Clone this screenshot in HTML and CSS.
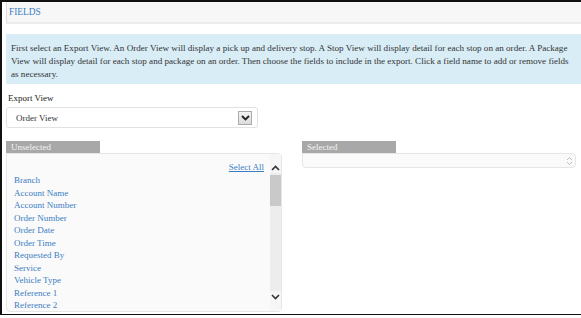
FILE: index.html
```html
<!DOCTYPE html>
<html>
<head>
<meta charset="utf-8">
<link rel="stylesheet" href="styles.css">
</head>
<body>
<div class="frame">
  <div class="panel-head">FIELDS</div>
  <div class="info">First select an Export View. An Order View will display a pick up and delivery stop. A Stop View will display detail for each stop on an order. A Package View will display detail for each stop and package on an order. Then choose the fields to include in the export. Click a field name to add or remove fields as necessary.</div>
  <div class="label">Export View</div>
  <div class="select">
    <span class="select-text">Order View</span>
    <span class="select-arrow"><svg width="9" height="6" viewBox="0 0 9 6"><path d="M1 1 L4.5 4.5 L8 1" fill="none" stroke="#222" stroke-width="1.8"/></svg></span>
  </div>
  <div class="columns">
    <div class="col">
      <div class="tab">Unselected</div>
      <div class="listbox">
        <div class="list">
          <div class="selall-row"><a class="selall">Select All</a></div>
          <a class="item">Branch</a>
          <a class="item">Account Name</a>
          <a class="item">Account Number</a>
          <a class="item">Order Number</a>
          <a class="item">Order Date</a>
          <a class="item">Order Time</a>
          <a class="item">Requested By</a>
          <a class="item">Service</a>
          <a class="item">Vehicle Type</a>
          <a class="item">Reference 1</a>
          <a class="item">Reference 2</a>
        </div>
        <div class="scrollbar">
          <div class="sb-arrow"><svg width="9" height="6" viewBox="0 0 9 6"><path d="M1 5 L4.5 1.5 L8 5" fill="none" stroke="#333" stroke-width="1.6"/></svg></div>
          <div class="sb-track"><div class="sb-thumb"></div></div>
          <div class="sb-arrow"><svg width="9" height="6" viewBox="0 0 9 6"><path d="M1 1 L4.5 4.5 L8 1" fill="none" stroke="#333" stroke-width="1.6"/></svg></div>
        </div>
      </div>
    </div>
    <div class="col">
      <div class="tab">Selected</div>
      <div class="listbox small">
        <div class="mini-arrows">
          <svg width="7" height="5" viewBox="0 0 7 5"><path d="M1 4 L3.5 1.5 L6 4" fill="none" stroke="#bbb" stroke-width="1"/></svg>
          <svg width="7" height="5" viewBox="0 0 7 5"><path d="M1 1 L3.5 3.5 L6 1" fill="none" stroke="#bbb" stroke-width="1"/></svg>
        </div>
      </div>
    </div>
  </div>
</div>
</body>
</html>
```
FILE: styles.css
```css
html, body {
  margin: 0;
  padding: 0;
  background: #fff;
}
body {
  font-family: "Liberation Serif", "Times New Roman", serif;
  font-size: 9px;
  color: #333;
}
.frame {
  width: 575px;
  height: 312px;
  border: 1px solid #111;
  border-left-width: 2px;
  border-top-width: 2px;
  box-shadow: 2px 2px 1px #9a9a9a;
  padding-left: 4px;
  overflow: hidden;
  box-sizing: content-box;
}
.panel-head {
  height: 20px;
  line-height: 21px;
  background: #f7f7f7;
  border-left: 1px solid #ddd;
  border-bottom: 2px solid #ececec;
  padding-left: 2px;
  color: #3a7dc3;
  font-size: 9.4px;
}
.info {
  margin-top: 10px;
  background: #d9edf7;
  padding: 8px 4px 3px 5px;
  line-height: 13px;
  font-size: 9.1px;
  color: #333;
}
.label {
  margin-top: 8px;
  line-height: 13px;
  padding-left: 2px;
  color: #222;
}
.select {
  margin-top: 2px;
  height: 19px;
  border: 1px solid #e2e2e2;
  border-radius: 3px;
  display: flex;
  align-items: center;
  justify-content: space-between;
  padding: 0 5px 0 9px;
  box-sizing: content-box;
  width: 236px;
}
.select-text {
  color: #333;
}
.select-arrow {
  width: 12px;
  height: 12px;
  border: 1px solid #aaa;
  background: linear-gradient(#f4f4f4, #dcdcdc);
  display: flex;
  align-items: center;
  justify-content: center;
}
.columns {
  margin-top: 13px;
  display: flex;
  gap: 20px;
}
.col {
  width: 276px;
}
.col + .col {
  width: 274px;
}
.tab {
  width: 89px;
  height: 12px;
  line-height: 13px;
  background: #a8a8a8;
  color: #f4f4f4;
  padding-left: 5px;
}
.listbox {
  height: 157px;
  border: 1px solid #e6e6e6;
  border-radius: 0 4px 4px 4px;
  background: #fafafa;
  display: flex;
}
.list {
  flex: 1;
  padding: 7px 5px 0 7px;
  display: flex;
  flex-direction: column;
}
.selall-row {
  display: flex;
  justify-content: flex-end;
  line-height: 13px;
}
.selall {
  color: #3a7dc3;
  text-decoration: underline;
  margin-right: 1px;
}
.item {
  color: #3a7dc3;
  line-height: 12.5px;
  display: block;
}
.scrollbar {
  width: 11px;
  display: flex;
  flex-direction: column;
  background: #f6f6f6;
}
.sb-arrow {
  display: flex;
  align-items: center;
  justify-content: center;
}
.sb-arrow:first-child {
  margin-top: 8px;
  height: 11px;
}
.sb-arrow:last-child {
  height: 11px;
  margin-bottom: 9px;
}
.sb-track {
  flex: 1;
  background: #ededed;
  padding-top: 2px;
}
.sb-thumb {
  height: 31px;
  background: #c9c9c9;
}
.listbox.small {
  height: 13px;
  justify-content: flex-end;
}
.mini-arrows {
  display: flex;
  flex-direction: column;
  justify-content: center;
  padding-right: 2px;
}
.mini-arrows svg {
  display: block;
}
```
